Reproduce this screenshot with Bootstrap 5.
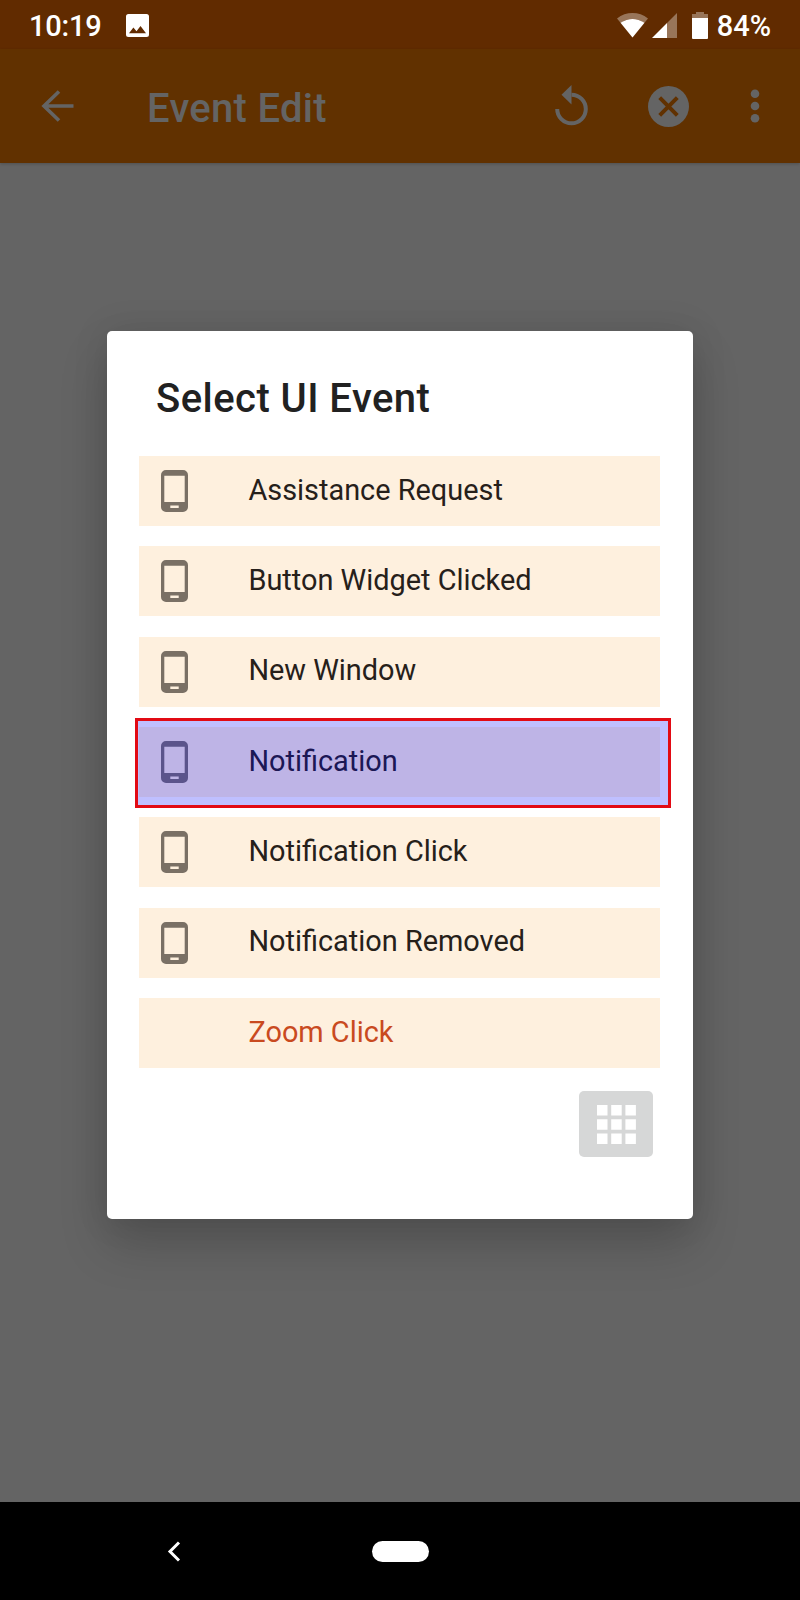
<!DOCTYPE html>
<html lang="en">
<head>
<meta charset="utf-8">
<meta name="viewport" content="width=device-width, initial-scale=1">
<title>Event Edit</title>
<link href="https://cdn.jsdelivr.net/npm/bootstrap@5.3.0/dist/css/bootstrap.min.css" rel="stylesheet">
<style>
  body { font-family: Roboto, "Liberation Sans", sans-serif; background: #646464; }
  svg { display: block; flex: none; }
  .screen { width: 800px; height: 1600px; }
  .status-bar { height: 49px; background: #612b00; color: #fff; font-size: 29px; font-weight: 500; line-height: 50px; padding: 2px 29px 0 29px; }
  .clock { width: 97px; letter-spacing: -.2px; }
  .app-bar { height: 114px; background: #613100; color: #646464; padding: 0 40px 0 41px; box-shadow: 0 1px 3px rgba(0,0,0,.2); }
  .app-title { font-size: 40px; font-weight: 500; line-height: 48px; letter-spacing: .3px; margin: 6px 0 0 73px; }
  .dialog-box { width: 586px; height: 888px; margin-top: 168px; padding: 41px 33px 0 32px; border-radius: 5px; box-shadow: 0 26px 48px rgba(0,0,0,.18), 0 0 36px rgba(0,0,0,.1); }
  .dialog-title { font-size: 40px; font-weight: 500; line-height: 54px; letter-spacing: .45px; color: #212121; margin: 0 0 30px 17px; }
  .event-list { gap: 20.35px; }
  .event-row { height: 70px; background: #fef0de; color: #26201a; font-size: 28.9px; padding-left: 22px; }
  .event-row svg { color: #7a7065; }
  .event-name { line-height: 40px; margin: -2.6px 0 0 60.4px; }
  .event-row.unset { color: #c94a1f; padding-left: 49px; }
  .highlight { inset: -9px -11px -11px -4px; border: 3px solid #e20a14; background: rgba(0,0,255,.25); }
  .grid-btn { width: 74px; height: 66px; background: #d6d7d7; border-radius: 5px; margin: 23px 7px 0 0; }
  .nav-bar { height: 98px; background: #000; }
  .nav-pill { width: 57px; height: 21px; border-radius: 11px; margin-left: 191px; }
</style>
</head>
<body>
<svg width="0" height="0" class="position-absolute" aria-hidden="true">
  <symbol id="phone" viewBox="0 0 27 42">
    <path fill="currentColor" fill-rule="evenodd" d="M5 0H22A5 5 0 0 1 27 5V37A5 5 0 0 1 22 42H5A5 5 0 0 1 0 37V5A5 5 0 0 1 5 0ZM3.300 5.800V32H23.700V5.800ZM9.300 35.500V38H17.700V35.500Z"/>
  </symbol>
</svg>
<div class="screen d-flex flex-column overflow-hidden">
  <header class="status-bar d-flex align-items-center">
    <span class="clock">10:19</span>
    <svg class="me-auto" width="23" height="23" viewBox="0 0 23 23"><path fill="#fff" fill-rule="evenodd" d="M2.500 0H20.500A2.500 2.500 0 0 1 23 2.500V20.500A2.500 2.500 0 0 1 20.500 23H2.500A2.500 2.500 0 0 1 0 20.500V2.500A2.500 2.500 0 0 1 2.500 0ZM3 19.300H20L14.500 12L10.500 17.200L7.400 13.600Z"/></svg>
    <svg width="31" height="25" viewBox="0 0 31 25"><path fill="#fff" opacity=".35" d="M0 5.500C9-1.800 22-1.800 31 5.500L27.500 9.800C20 4.700 11 4.700 3.500 9.800Z"/><path fill="#fff" d="M3.500 9.800C11 4.700 20 4.700 27.500 9.800L15.500 24.500Z"/></svg>
    <svg class="ms-1" width="25" height="25" viewBox="0 0 25 25"><path fill="#fff" opacity=".35" d="M15 10L25 0V25H15Z"/><path fill="#fff" d="M0 25L15 10V25Z"/></svg>
    <svg width="16" height="27" viewBox="0 0 16 27" style="margin-left:15px"><path fill="#fff" opacity=".35" d="M4 0H12V2H16V6H0V2H4Z"/><path fill="#fff" d="M0 6H16V26Q16 27 15 27H1Q0 27 0 26Z"/></svg>
    <span style="margin-left:9px">84%</span>
  </header>

  <nav class="app-bar d-flex align-items-center flex-shrink-0">
    <svg width="33" height="32" viewBox="0 0 33 32" fill="none" stroke="currentColor" stroke-width="3.600"><path d="M32.500 16H3M18 1.500L3 16L18 30.500"/></svg>
    <h1 class="app-title">Event Edit</h1>
    <svg class="ms-auto" width="34" height="41" viewBox="0 0 34 41" style="margin:0 -1px 2px 0"><path d="M2.200 24A14.300 14.300 0 1 0 16.500 9.700" fill="none" stroke="currentColor" stroke-width="4"/><path fill="currentColor" d="M16.500 0V19.500L6.500 9.700Z"/></svg>
    <svg width="41" height="41" viewBox="0 0 41 41" style="margin:0 0 0 60px"><circle cx="20.500" cy="20.500" r="20.500" fill="currentColor"/><path d="M11.700 11.700L29.300 29.300M29.300 11.700L11.700 29.300" stroke="#613100" stroke-width="4"/></svg>
    <svg width="10" height="34" viewBox="0 0 10 34" fill="currentColor" style="margin-left:61px"><circle cx="5" cy="4.700" r="4.300"/><circle cx="5" cy="17" r="4.300"/><circle cx="5" cy="29.300" r="4.300"/></svg>
  </nav>

  <main class="flex-grow-1 d-flex justify-content-center align-items-start">
    <section class="dialog-box bg-white d-flex flex-column">
      <h2 class="dialog-title">Select UI Event</h2>
      <div class="event-list d-flex flex-column">
        <div class="event-row d-flex align-items-center"><svg width="27" height="42"><use href="#phone"/></svg><span class="event-name">Assistance Request</span></div>
        <div class="event-row d-flex align-items-center"><svg width="27" height="42"><use href="#phone"/></svg><span class="event-name">Button Widget Clicked</span></div>
        <div class="event-row d-flex align-items-center"><svg width="27" height="42"><use href="#phone"/></svg><span class="event-name">New Window</span></div>
        <div class="event-row d-flex align-items-center position-relative"><svg width="27" height="42"><use href="#phone"/></svg><span class="event-name">Notification</span><div class="highlight position-absolute"></div></div>
        <div class="event-row d-flex align-items-center"><svg width="27" height="42"><use href="#phone"/></svg><span class="event-name">Notification Click</span></div>
        <div class="event-row d-flex align-items-center"><svg width="27" height="42"><use href="#phone"/></svg><span class="event-name">Notification Removed</span></div>
        <div class="event-row unset d-flex align-items-center"><span class="event-name">Zoom Click</span></div>
      </div>
      <button type="button" class="grid-btn border-0 p-0 align-self-end d-flex align-items-center justify-content-center" aria-label="Grid view">
        <svg width="39" height="39" viewBox="0 0 39 39" fill="#fff"><path d="M0 0h10.500v10.500H0zM14.200 0h10.500v10.500H14.200zM28.400 0h10.500v10.500H28.400zM0 14.200h10.500v10.500H0zM14.200 14.200h10.500v10.500H14.200zM28.400 14.200h10.500v10.500H28.400zM0 28.400h10.500v10.500H0zM14.200 28.400h10.500v10.500H14.200zM28.400 28.400h10.500v10.500H28.400z"/></svg>
      </button>
    </section>
  </main>

  <footer class="nav-bar d-flex align-items-center flex-shrink-0">
    <svg width="14" height="21" viewBox="0 0 14 21" fill="none" stroke="#fff" stroke-width="3" style="margin-left:167px"><path d="M12 1.500L3 10.500L12 19.500"/></svg>
    <div class="nav-pill bg-white"></div>
  </footer>
</div>
<script src="https://cdn.jsdelivr.net/npm/bootstrap@5.3.0/dist/js/bootstrap.bundle.min.js"></script>
</body>
</html>
